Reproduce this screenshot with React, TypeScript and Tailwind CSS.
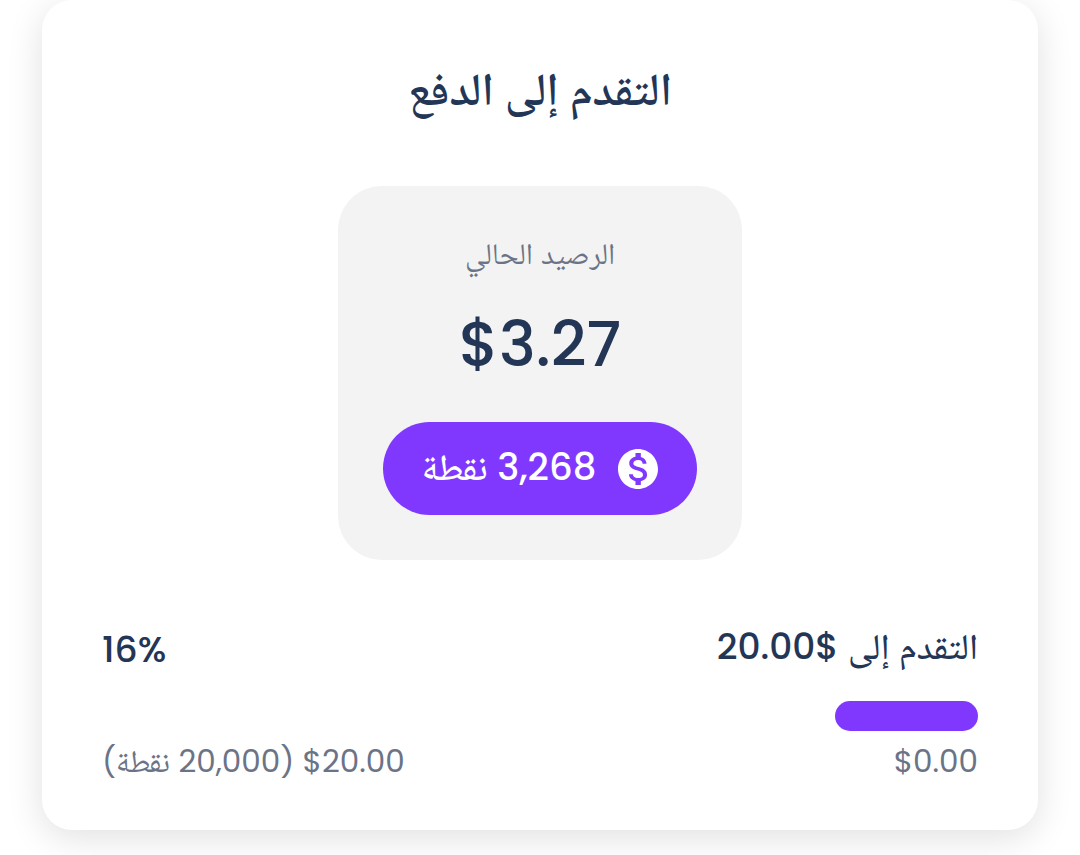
const balance = 3.27;
const goal = 20;
const percent = (balance / goal) * 100;

function CoinIcon() {
  return (
    <svg viewBox="2 2 20 20" className="size-10 shrink-0" fill="currentColor" aria-hidden="true">
      <path d="M12 2C6.48 2 2 6.48 2 12s4.48 10 10 10 10-4.48 10-10S17.52 2 12 2zm1.41 16.09V20h-2.67v-1.93c-1.71-.36-3.16-1.46-3.27-3.4h1.96c.1 1.05.82 1.87 2.65 1.87 1.96 0 2.4-.98 2.4-1.59 0-.83-.44-1.61-2.67-2.14-2.48-.6-4.18-1.62-4.18-3.67 0-1.72 1.39-2.84 3.11-3.21V4h2.67v1.95c1.86.45 2.79 1.86 2.85 3.39H14.3c-.05-1.11-.64-1.87-2.22-1.87-1.5 0-2.4.68-2.4 1.64 0 .84.65 1.39 2.67 1.91s4.18 1.39 4.18 3.91c-.01 1.83-1.38 2.83-3.12 3.16z" />
    </svg>
  );
}

export default function App() {
  return (
    <main
      dir="rtl"
      lang="ar"
      className="overflow-hidden bg-white px-[42px] pb-[25px] font-['Poppins','Inter','Noto_Naskh_Arabic','Noto_Sans',sans-serif] text-[#243656]"
    >
      <section className="rounded-[30px] bg-white px-[60px] pt-[54px] pb-[46px] shadow-[0_8px_36px_rgba(0,0,0,0.12)]">
        <h1 className="text-center text-[46px] leading-[70px] font-semibold">التقدم إلى الدفع</h1>

        <div className="mx-auto mt-[62px] flex w-fit flex-col items-center rounded-[44px] bg-[#f3f3f3] px-[45px] pt-[43px] pb-[45px]">
          <p className="text-[30px] leading-[50px] text-[#6b7487]">الرصيد الحالي</p>
          <p className="mt-[18px] text-[62px] leading-[96px] font-medium">$3.27</p>
          <div className="mt-[29px] flex h-[93px] items-center gap-[22px] rounded-full bg-[#8038ff] px-[39px] text-[37px] leading-[54px] font-medium text-white">
            <CoinIcon />
            <span className="pb-[3px]">3,268 نقطة</span>
          </div>
        </div>

        <div className="mt-[57px] flex items-center justify-between text-[36px] leading-[60px] font-medium">
          <h2 id="goal" className="pb-[6px]">التقدم إلى $20.00</h2>
          <span>16%</span>
        </div>
        <div
          role="progressbar"
          aria-labelledby="goal"
          aria-valuenow={Math.round(percent)}
          aria-valuemin={0}
          aria-valuemax={100}
          className="mt-[18px] h-[30px] rounded-full"
        >
          <div className="h-full rounded-full bg-[#8038ff]" style={{ width: `${percent}%` }} />
        </div>
        <div className="mt-[8px] flex items-center justify-between text-[31px] leading-[45px] text-[#6b7487]">
          <span>$0.00</span>
          <span>$20.00 (20,000 نقطة)</span>
        </div>
      </section>
    </main>
  );
}
